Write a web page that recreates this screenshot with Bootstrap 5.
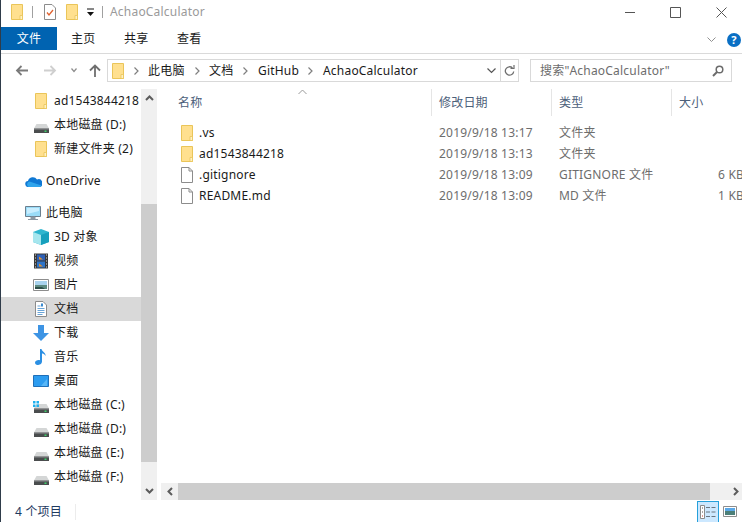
<!DOCTYPE html>
<html lang="zh-CN">
<head>
    <meta charset="UTF-8">
    <title>AchaoCalculator</title>
    <link rel="stylesheet" href="https://cdn.jsdelivr.net/npm/bootstrap@5.3.3/dist/css/bootstrap.min.css">
<style>
    html, body { height: 100%; overflow: hidden; background: #fff; }
    body { font-family: "Noto Sans", "Noto Sans CJK SC", sans-serif; font-size: 12px; line-height: 16px; color: #1a1a1a; letter-spacing: .2px; }
    svg { display: block; flex: none; }
    .win { width: 742px; height: 522px; border-left: 1px solid #2f3c4a; overflow: hidden; }

    .title-bar { height: 24px; padding-left: 10px; }
    .title-bar .sep { width: 1px; height: 12px; background: #a0a0a0; }
    .title-gap-a { margin-left: 9px; }
    .title-gap-b { margin-left: 11px; }
    .title-gap-c { margin-left: 10px; }
    .title-gap-d { margin-left: 8px; }
    .title-gap-e { margin-left: 7px; }
    .title-text { color: #9a9a9a; margin-left: 7px; }
    .win-ctl { gap: 35px; padding-right: 15px; }

    .ribbon { height: 27px; margin-top: 3px; border-bottom: 1px solid #dadada; }
    .tab-file { width: 56px; height: 23px; background: #0063b1; color: #fff; }
    .tab-list { height: 23px; padding-left: 14px; }
    .tab-item { width: 53px; }
    .ribbon-right { height: 26px; }
    .help-dot { width: 14px; height: 14px; border-radius: 50%; background: #0a6fc4; color: #fff; font-size: 11px; font-weight: 700; line-height: 14px; text-align: center; margin: 0 1px 0 11px; }

    .addr-row { height: 35px; padding-top: 5px; }
    .nav-btns { width: 106px; height: 22px; }
    .nav-back { margin-left: 14px; }
    .nav-fwd { margin-left: 16px; }
    .nav-drop { margin-left: 14px; }
    .nav-up { margin-left: 12px; }
    .addr-box { width: 412px; height: 23px; border: 1px solid #d9d9d9; }
    .addr-box .crumb { color: #1a1a1a; white-space: nowrap; }
    .addr-end { width: 18px; height: 21px; border-left: 1px solid #d9d9d9; }
    .search-box { width: 202px; height: 23px; border: 1px solid #d9d9d9; margin-left: 11px; padding: 0 7px 0 9px; color: #6d6d6d; }
    .addr-sp1 { margin-left: 4px; }
    .addr-sp2 { margin-left: 10px; }
    .addr-sp3 { margin-left: 8px; }
    .addr-sp4 { margin-left: 9px; }
    .addr-sp5 { margin-left: 10px; }
    .crumb-a { width: 39px; }
    .crumb-b { width: 26px; }
    .crumb-c { width: 42px; }

    .content { height: 411px; }
    .side { width: 140px; }
    .side-row { height: 24px; }
    .side-row.sub { padding-left: 32px; }
    .side-row.top { padding-left: 24px; }
    .side-row.cur { background: #d9d9d9; }
    .side-row .ico { width: 18px; margin-right: 3px; }
    .side-row .ind { margin-left: 2px; }
    .side-row .ind-1 { margin-left: 1px; }
    .side-row .hdd { margin: 6px 0 0 1px; }
    .side-row .win-logo { top: 3px; left: 0; }
    .gap-top { margin-top: 8px; }

    .vbar { width: 16px; background: #f0f0f0; }
    .vbar .arrow { height: 18px; }
    .vbar .thumb { height: 258px; background: #cdcdcd; margin-top: 97px; }

    .main-pane { width: 581px; margin-left: 4px; }
    .head-row { height: 27px; }
    .col-name { width: 271px; padding-left: 17px; }
    .col-date { width: 120px; padding-left: 7px; }
    .col-kind { width: 120px; padding-left: 7px; }
    .col-size { width: 70px; padding-left: 7px; }
    .head-row .cell { height: 27px; line-height: 27px; color: #4c607a; border-right: 1px solid #e5e5e5; }
    .head-row .cell:last-child { border-right: 0; }
    .sort-mark { top: 0; left: 137px; }
    .rows { padding-top: 6px; flex: 1; }
    .file-row { height: 21px; }
    .file-row .col-name { padding-left: 20px; }
    .file-row .col-date, .file-row .col-kind { color: #6d6d6d; }
    .file-row .col-size { color: #6d6d6d; padding-left: 46px; white-space: nowrap; }
    .file-name { margin-left: 6px; }
    .hbar { height: 17px; background: #f0f0f0; }
    .hbar .thumb { width: 532px; background: #cdcdcd; }
    .hbar .arrow { width: 17px; }
    .hbar .arrow-end { width: 32px; padding-right: 3px; }

    .status { height: 22px; padding: 1px 0 0 14px; color: #1e3a5f; }
    .status .sep { width: 1px; height: 16px; background: #ececec; margin-left: 13px; }
    .view-on { width: 22px; height: 22px; background: #cce8ff; border: 1px solid #26a0da; border-bottom-width: 0; }
    .view-off { width: 14px; margin: 0 5px 0 4px; }
</style>
</head>
<body>
<svg width="0" height="0" class="position-absolute">
    <symbol id="folder" viewBox="0 0 12 16">
        <path d="M.5.5h11v15H.5z" fill="#ffe08f" stroke="#eac559"/>
        <path d="M9 11.500h2.500v4H9z" fill="#fff1c4" stroke="#eac559" stroke-width=".8"/>
    </symbol>
    <symbol id="file" viewBox="0 0 12 16">
        <path d="M.5.5H8L11.500 4v11.500H.5z" fill="#fff" stroke="#8c8c8c"/>
        <path d="M8 .5V4h3.500" fill="none" stroke="#8c8c8c"/>
    </symbol>
    <symbol id="drive" viewBox="0 0 15 9">
        <path d="M2.500 0h10L15 4.500H0z" fill="#d4d6d6"/>
        <path d="M0 4.500h15V9H0z" fill="#4a4d4e"/>
        <path d="M0 4.500h15v1H0z" fill="#8a8d8e"/>
        <path d="M10.500 6.500h2V8h-2z" fill="#3ed06a"/>
    </symbol>
    <symbol id="chev" viewBox="0 0 5 8">
        <path d="M.5.500L4 4 .5 7.500" fill="none" stroke="#7f7f7f" stroke-width="1.200"/>
    </symbol>
</svg>

<div class="win d-flex flex-column">
    <!-- title bar -->
    <div class="title-bar d-flex align-items-center">
        <svg width="12" height="16"><use href="#folder"/></svg>
        <span class="sep title-gap-a"></span>
        <svg class="title-gap-b" width="12" height="16" viewBox="0 0 12 16">
            <path d="M.5.500H8L11.500 4v11.500H.5z" fill="#fff" stroke="#8c8c8c"/>
            <path d="M3 8.500l2 2.500 4-5" fill="none" stroke="#e0622f" stroke-width="1.300"/>
        </svg>
        <svg class="title-gap-c" width="12" height="16"><use href="#folder"/></svg>
        <svg class="title-gap-d" width="9" height="9" viewBox="0 0 9 9">
            <path d="M1 1h7" stroke="#111"/><path d="M1 4h7L4.500 8z" fill="#111"/>
        </svg>
        <span class="sep title-gap-e"></span>
        <span class="title-text">AchaoCalculator</span>
        <div class="win-ctl ms-auto d-flex align-items-center">
            <svg width="10" height="11"><path d="M0 5.500h10" stroke="#555"/></svg>
            <svg width="11" height="11"><path d="M.5.500h10v10H.5z" fill="none" stroke="#555"/></svg>
            <svg width="11" height="11"><path d="M.5.500l10 10M10.500.5l-10 10" stroke="#555"/></svg>
        </div>
    </div>

    <!-- ribbon tabs -->
    <div class="ribbon d-flex align-items-start">
        <div class="tab-file d-flex align-items-center justify-content-center">文件</div>
        <div class="tab-list d-flex align-items-center">
            <span class="tab-item">主页</span><span class="tab-item">共享</span><span class="tab-item">查看</span>
        </div>
        <div class="ribbon-right ms-auto d-flex align-items-center">
            <svg width="9" height="6"><path d="M.5.500l4 4 4-4" fill="none" stroke="#909090"/></svg>
            <div class="help-dot">?</div>
        </div>
    </div>

    <!-- address row -->
    <div class="addr-row d-flex align-items-start">
        <div class="nav-btns d-flex align-items-center">
            <svg class="nav-back" width="13" height="11"><path d="M13 5.500H2M6.500 1L2 5.500 6.500 10" fill="none" stroke="#7a7a7a" stroke-width="1.800"/></svg>
            <svg class="nav-fwd" width="13" height="11"><path d="M0 5.500h11M6.500 1L11 5.500 6.500 10" fill="none" stroke="#cfcfcf" stroke-width="1.800"/></svg>
            <svg class="nav-drop" width="6" height="5"><path d="M.5.500l2.500 3 2.500-3" fill="none" stroke="#8c8c8c" stroke-width="1.200"/></svg>
            <svg class="nav-up" width="12" height="13"><path d="M6 13V2M1 6.500L6 1.500l5 5" fill="none" stroke="#6f6f6f" stroke-width="1.800"/></svg>
        </div>
        <div class="addr-box d-flex align-items-center">
            <svg class="addr-sp1" width="12" height="16"><use href="#folder"/></svg>
            <svg class="addr-sp2" width="5" height="8"><use href="#chev"/></svg>
            <span class="crumb crumb-a addr-sp4">此电脑</span>
            <svg class="addr-sp3" width="5" height="8"><use href="#chev"/></svg>
            <span class="crumb crumb-b addr-sp4">文档</span>
            <svg class="addr-sp3" width="5" height="8"><use href="#chev"/></svg>
            <span class="crumb crumb-c addr-sp5">GitHub</span>
            <svg class="addr-sp3" width="5" height="8"><use href="#chev"/></svg>
            <span class="crumb addr-sp5">AchaoCalculator</span>
            <div class="ms-auto d-flex align-items-center">
                <svg class="me-1" width="9" height="6"><path d="M.5.500l4 4 4-4" fill="none" stroke="#555" stroke-width="1.200"/></svg>
                <div class="addr-end d-flex align-items-center justify-content-center">
                    <svg width="11" height="12" viewBox="0 0 11 12"><path d="M8.500 3A4.200 4.200 0 1 0 9.700 6.500" fill="none" stroke="#6f6f6f" stroke-width="1.300"/><path d="M6.500 3.500h3.500V0" fill="none" stroke="#6f6f6f" stroke-width="1.200"/></svg>
                </div>
            </div>
        </div>
        <div class="search-box d-flex align-items-center justify-content-between">
            <span>搜索"AchaoCalculator"</span>
            <svg width="12" height="12" viewBox="0 0 12 12"><circle cx="7.500" cy="4.500" r="3.300" fill="none" stroke="#6b6b6b" stroke-width="1.500"/><path d="M5 7l-4 4" stroke="#6b6b6b" stroke-width="2"/></svg>
        </div>
    </div>

    <div class="content d-flex">
        <!-- nav tree -->
        <div class="side">
            <div class="side-row sub d-flex align-items-center"><span class="ico"><svg class="ind" width="12" height="16"><use href="#folder"/></svg></span>ad1543844218</div>
            <div class="side-row sub d-flex align-items-center"><span class="ico"><svg class="hdd" width="15" height="9"><use href="#drive"/></svg></span>本地磁盘 (D:)</div>
            <div class="side-row sub d-flex align-items-center"><span class="ico"><svg class="ind" width="12" height="16"><use href="#folder"/></svg></span>新建文件夹 (2)</div>

            <div class="side-row top gap-top d-flex align-items-center">
                <span class="ico"><svg width="17" height="11" viewBox="0 0 17 11"><path d="M3.500 11a3 3 0 0 1-.5-6 5 5 0 0 1 9-1.500 3.800 3.800 0 0 1 3 7.500z" fill="#0f78d4"/><path d="M3.500 11a3 3 0 0 1 1-5.500l9 3 3 1a2 2 0 0 1-2 1.500z" fill="#2fa4ec"/></svg></span>OneDrive
            </div>

            <div class="side-row top gap-top d-flex align-items-center">
                <span class="ico"><svg width="16" height="15" viewBox="0 0 16 15"><path d="M.5.500h15v10H.5z" fill="#9adcf8" stroke="#6b7f8f"/><path d="M2 2h12v3L2 8z" fill="#c9eeff"/><path d="M6 11h4v2H6zM3 13.500h10" fill="#8b98a3" stroke="#8b98a3"/></svg></span>此电脑
            </div>
            <div class="side-row sub d-flex align-items-center"><span class="ico"><svg width="16" height="16" viewBox="0 0 16 16"><path d="M8 0l8 3v10l-8 3-8-3V3z" fill="#2fb6cf"/><path d="M0 3l8 3v10l-8-3z" fill="#a6e6ee"/><path d="M8 6l8-3v10l-8 3z" fill="#17a0bd"/></svg></span>3D 对象</div>
            <div class="side-row sub d-flex align-items-center"><span class="ico"><svg class="ind-1" width="14" height="16" viewBox="0 0 14 15"><path d="M0 0h14v15H0z" fill="#3a3a3a"/><path d="M3 1h8v6H3z" fill="#2d5fb5"/><path d="M3 8h8v6H3z" fill="#2e74c9"/><path d="M5 3l4 3H5zM5 10l4 3H5z" fill="#e2902c"/><path d="M1 1h1v1H1zM1 4h1v1H1zM1 7h1v1H1zM1 10h1v1H1zM1 13h1v1H1zM12 1h1v1h-1zM12 4h1v1h-1zM12 7h1v1h-1zM12 10h1v1h-1zM12 13h1v1h-1z" fill="#ddd"/></svg></span>视频</div>
            <div class="side-row sub d-flex align-items-center"><span class="ico"><svg width="16" height="12" viewBox="0 0 16 12"><path d="M.5.500h15v11H.5z" fill="#fff" stroke="#8d8d8d"/><path d="M2 2h12v4H2z" fill="#a9d3ee"/><path d="M2 6h12v4H2z" fill="#5d8a80"/><path d="M2 8h7l3 2H2z" fill="#2d4f4a"/></svg></span>图片</div>
            <div class="side-row sub cur d-flex align-items-center"><span class="ico"><svg class="ind" width="12" height="16" viewBox="0 0 12 16"><path d="M.5.500H8L11.500 4v11.500H.5z" fill="#fff" stroke="#8c8c8c"/><path d="M2.500 5h3M2.500 7.500h7M2.500 9.500h7M2.500 11.500h7M2.500 13.500h5" stroke="#6aa5d8"/><path d="M6 2.500h2v3H6z" fill="#3a8ad0"/></svg></span>文档</div>
            <div class="side-row sub d-flex align-items-center"><span class="ico"><svg width="16" height="16" viewBox="0 0 16 16"><path d="M5 0h6v8h5l-8 8-8-8h5z" fill="#3d94e4"/></svg></span>下载</div>
            <div class="side-row sub d-flex align-items-center"><span class="ico"><svg class="ind" width="11" height="16" viewBox="0 0 11 16"><path d="M5 0h1.500c.5 3 4.500 3.500 4 7-1-2-2.500-2.500-3.500-2.500V12.500C7 15 4.500 16 2.500 16 1 16 0 15 0 13.800 0 12 2 11 3.500 11c.6 0 1.100.1 1.500.3z" fill="#2b8fe3"/></svg></span>音乐</div>
            <div class="side-row sub d-flex align-items-center"><span class="ico"><svg width="16" height="12" viewBox="0 0 16 12"><path d="M.5.500h15v11H.5z" fill="#2c9cf0" stroke="#1f6fb8"/><path d="M8 11L14 4v7z" fill="#58b6f6"/></svg></span>桌面</div>
            <div class="side-row sub d-flex align-items-center"><span class="ico position-relative"><svg class="win-logo position-absolute" width="6" height="6"><path d="M0 0h2.500v2.500H0zM3.500 0H6v2.500H3.500zM0 3.500h2.500V6H0zM3.500 3.500H6V6H3.500z" fill="#1fb0ee"/></svg><svg class="hdd" width="15" height="9"><use href="#drive"/></svg></span>本地磁盘 (C:)</div>
            <div class="side-row sub d-flex align-items-center"><span class="ico"><svg class="hdd" width="15" height="9"><use href="#drive"/></svg></span>本地磁盘 (D:)</div>
            <div class="side-row sub d-flex align-items-center"><span class="ico"><svg class="hdd" width="15" height="9"><use href="#drive"/></svg></span>本地磁盘 (E:)</div>
            <div class="side-row sub d-flex align-items-center"><span class="ico"><svg class="hdd" width="15" height="9"><use href="#drive"/></svg></span>本地磁盘 (F:)</div>
        </div>

        <!-- nav tree scrollbar -->
        <div class="vbar d-flex flex-column">
            <div class="arrow d-flex align-items-center justify-content-center"><svg width="9" height="6"><path d="M1 5l3.500-3.500L8 5" fill="none" stroke="#5c5c5c" stroke-width="2"/></svg></div>
            <div class="thumb"></div>
            <div class="arrow mt-auto d-flex align-items-center justify-content-center"><svg width="9" height="6"><path d="M1 1l3.500 3.500L8 1" fill="none" stroke="#5c5c5c" stroke-width="2"/></svg></div>
        </div>

        <!-- file list -->
        <div class="main-pane d-flex flex-column">
            <div class="head-row d-flex position-relative">
                <svg class="position-absolute sort-mark" width="9" height="6"><path d="M.5 5L4.500 1l4 4" fill="none" stroke="#9a9a9a"/></svg>
                <div class="cell col-name">名称</div>
                <div class="cell col-date">修改日期</div>
                <div class="cell col-kind">类型</div>
                <div class="cell col-size">大小</div>
            </div>
            <div class="rows">
                <div class="file-row d-flex align-items-center">
                    <div class="col-name d-flex align-items-center"><svg width="12" height="16"><use href="#folder"/></svg><span class="file-name">.vs</span></div>
                    <div class="col-date">2019/9/18 13:17</div><div class="col-kind">文件夹</div><div class="col-size"></div>
                </div>
                <div class="file-row d-flex align-items-center">
                    <div class="col-name d-flex align-items-center"><svg width="12" height="16"><use href="#folder"/></svg><span class="file-name">ad1543844218</span></div>
                    <div class="col-date">2019/9/18 13:13</div><div class="col-kind">文件夹</div><div class="col-size"></div>
                </div>
                <div class="file-row d-flex align-items-center">
                    <div class="col-name d-flex align-items-center"><svg width="12" height="16"><use href="#file"/></svg><span class="file-name">.gitignore</span></div>
                    <div class="col-date">2019/9/18 13:09</div><div class="col-kind">GITIGNORE 文件</div><div class="col-size">6 KB</div>
                </div>
                <div class="file-row d-flex align-items-center">
                    <div class="col-name d-flex align-items-center"><svg width="12" height="16"><use href="#file"/></svg><span class="file-name">README.md</span></div>
                    <div class="col-date">2019/9/18 13:09</div><div class="col-kind">MD 文件</div><div class="col-size">1 KB</div>
                </div>
            </div>
            <div class="hbar d-flex">
                <div class="arrow d-flex align-items-center justify-content-center"><svg width="6" height="9"><path d="M5 1L1.500 4.500 5 8" fill="none" stroke="#5c5c5c" stroke-width="2"/></svg></div>
                <div class="thumb"></div>
                <div class="arrow arrow-end ms-auto d-flex align-items-center justify-content-end"><svg width="6" height="9"><path d="M1 1l3.500 3.500L1 8" fill="none" stroke="#5c5c5c" stroke-width="2"/></svg></div>
            </div>
        </div>
    </div>

    <!-- status bar -->
    <div class="status d-flex align-items-center">
        <span>4 个项目</span><span class="sep"></span>
        <div class="ms-auto d-flex align-items-center">
            <div class="view-on d-flex align-items-center justify-content-center">
                <svg width="16" height="14" viewBox="0 0 16 14"><path d="M.5.500h4v13h-4z" fill="#fff" stroke="#8c8c8c"/><path d="M2 2.500h1v1H2zM2 6.500h1v1H2z" fill="#555"/><path d="M2 10.500h1v1H2z" fill="#c0392b"/><path d="M6 2.500h4M11.500 2.500h4M6 7h4M11.500 7h4M6 11.500h4M11.500 11.500h4" stroke="#6b7680"/></svg>
            </div>
            <div class="view-off"><svg width="14" height="11" viewBox="0 0 14 11"><path d="M.5.500h13v10H.5z" fill="#fff" stroke="#8d8d8d"/><path d="M2 2h10v3H2z" fill="#5aa8e8"/><path d="M2 5h10v4H2z" fill="#4c7f78"/></svg></div>
        </div>
    </div>
</div>
</body>
</html>
